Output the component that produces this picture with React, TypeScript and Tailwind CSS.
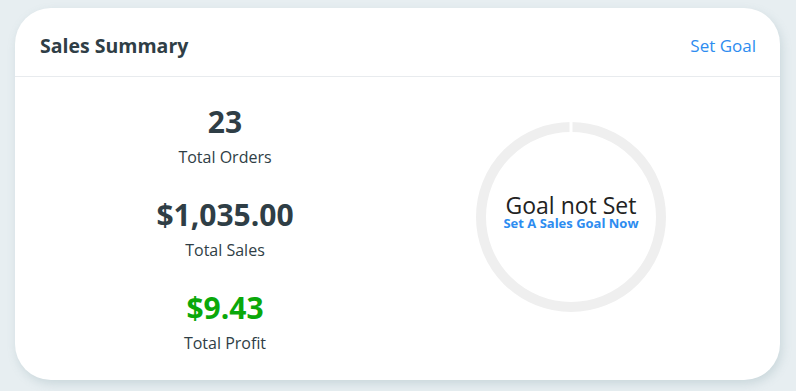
import React from "react";

function Stat({ value, label, green }: { value: string; label: string; green?: boolean }) {
  return (
    <div className="flex flex-col items-center">
      <div className={`text-[30px] font-bold leading-[36px] ${green ? "text-[#0aa80a]" : "text-[#2f3e46]"}`}>{value}</div>
      <div className="text-[16px] leading-[22px] mt-[6px] text-[#2f3e46]">{label}</div>
    </div>
  );
}

export default function App() {
  return (
    <div className="w-[796px] h-[391px] bg-[#e7eef1] pt-[8px] pl-[15px]" style={{ fontFamily: "'Open Sans', sans-serif" }}>
      <div className="w-[765px] h-[372px] bg-white rounded-[36px] shadow-[2px_4px_10px_rgba(120,150,160,0.25)] flex flex-col">
        <div className="h-[69px] flex items-center justify-between pl-[25px] pr-[24px] pt-[8px] border-b border-[#e8ebee]">
          <div className="text-[19.5px] font-bold text-[#2f3e46]">Sales Summary</div>
          <div className="text-[17px] text-[#2d8cf0]">Set Goal</div>
        </div>
        <div className="flex flex-1">
          <div className="w-[420px] flex flex-col items-center pt-[27px] gap-[29px]">
            <Stat value="23" label="Total Orders" />
            <Stat value="$1,035.00" label="Total Sales" />
            <Stat value="$9.43" label="Total Profit" green />
          </div>
          <div className="w-[272px] flex justify-center pt-[45px]">
            <div className="relative w-[190px] h-[190px]">
              <svg width="190" height="190" viewBox="0 0 190 190" className="absolute inset-0">
                <circle cx="95" cy="95" r="90" fill="none" stroke="#efefef" strokeWidth="10" />
                <rect x="93.5" y="0" width="3" height="12" fill="#ffffff" />
              </svg>
              <div className="absolute inset-0 flex flex-col items-center justify-center">
                <div className="flex flex-col items-center -translate-y-[5px]">
                  <div className="text-[23px] leading-[22px] text-[#222]">Goal not Set</div>
                  <div className="text-[13px] leading-[14px] font-bold text-[#2d8cf0]">Set A Sales Goal Now</div>
                </div>
              </div>
            </div>
          </div>
        </div>
      </div>
    </div>
  );
}
